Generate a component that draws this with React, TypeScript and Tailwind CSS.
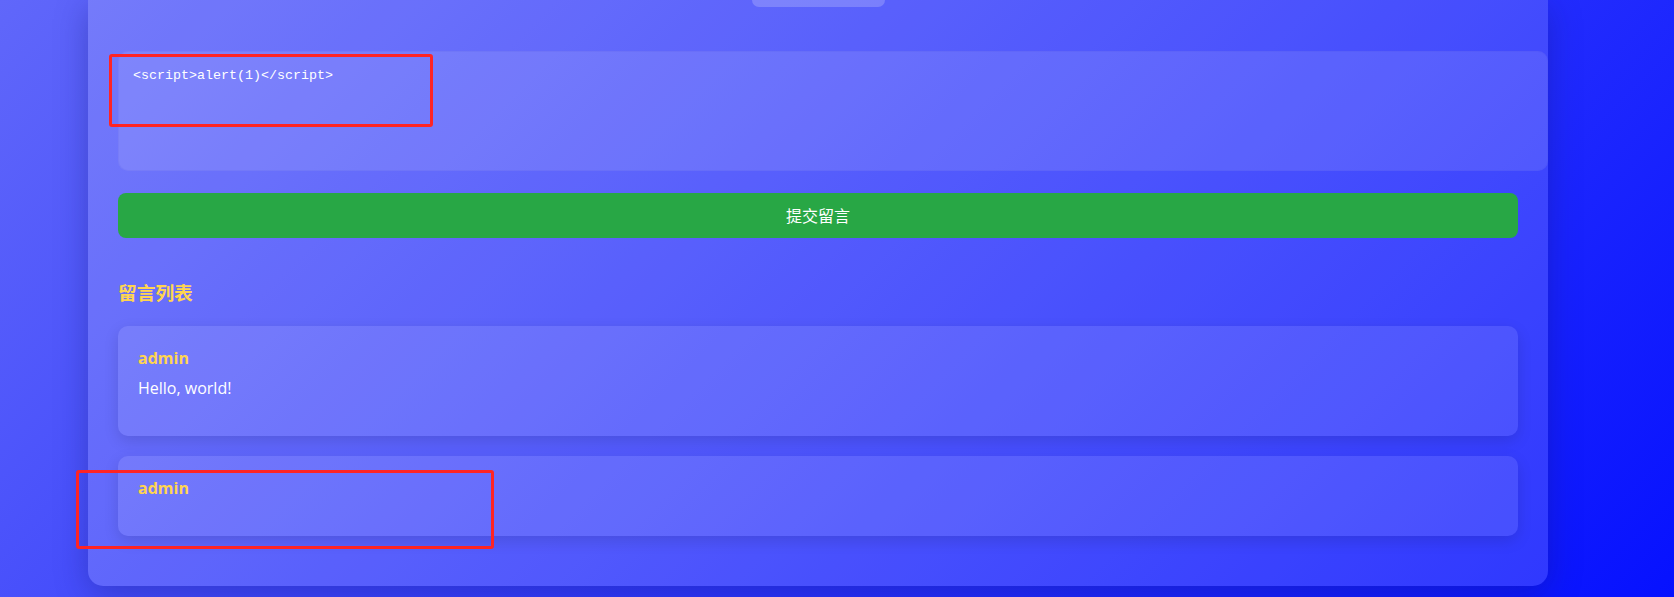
import { useState } from 'react';

type Message = { user: string; content: string };

const sans = "font-['Open_Sans','Noto_Sans_CJK_SC',sans-serif]";

function App() {
  const [text, setText] = useState('<script>alert(1)</script>');
  const messages: Message[] = [
    { user: 'admin', content: 'Hello, world!' },
    { user: 'admin', content: '' },
  ];

  return (
    <div
      className={`relative h-[597px] overflow-hidden bg-[linear-gradient(135deg,#6067fa,#0611ff)] ${sans}`}
    >
      <div className="ml-[88px] w-[1460px] rounded-b-[15px] bg-white/15 px-[30px] pb-[50px] shadow-[0_8px_32px_rgba(20,25,120,0.35)]">
        {/* bottom of the tab above */}
        <div className="mx-auto h-[7px] w-[133px] rounded-b-lg bg-white/20" />

        <textarea
          value={text}
          onChange={(e) => setText(e.target.value)}
          className="mt-[44px] box-content block h-[90px] w-full resize-none rounded-[10px] bg-white/10 p-[15px] font-['Liberation_Mono',monospace] text-[13.33px] text-white shadow-[inset_0_0_0_1px_rgba(60,60,200,0.08)] outline-none"
        />

        <button
          type="button"
          className="mt-[22px] block h-[45px] w-full rounded-lg bg-[#28a745] text-base text-white"
        >
          提交留言
        </button>

        <h3 className="mt-[41px] text-[18.72px] leading-7 font-bold text-[#ffd54f]">
          留言列表
        </h3>

        <div className="mt-[19px] flex flex-col gap-5">
          {messages.map((m, i) => (
            <div
              key={i}
              className="rounded-[10px] bg-white/10 px-5 pt-5 pb-9 shadow-[0_5px_15px_rgba(0,0,0,0.12)]"
            >
              <div className="text-base leading-6 font-bold text-[#ffd54f]">{m.user}</div>
              {m.content && (
                <p className="mt-1.5 text-base leading-6 text-white">{m.content}</p>
              )}
            </div>
          ))}
        </div>
      </div>

      {/* annotation boxes */}
      <div className="absolute top-[54px] left-[109px] h-[73px] w-[324px] rounded-[3px] border-[3px] border-[#ff2424]" />
      <div className="absolute top-[470px] left-[76px] h-[79px] w-[418px] rounded-[3px] border-[3px] border-[#ff2424]" />
    </div>
  );
}

export default App;
